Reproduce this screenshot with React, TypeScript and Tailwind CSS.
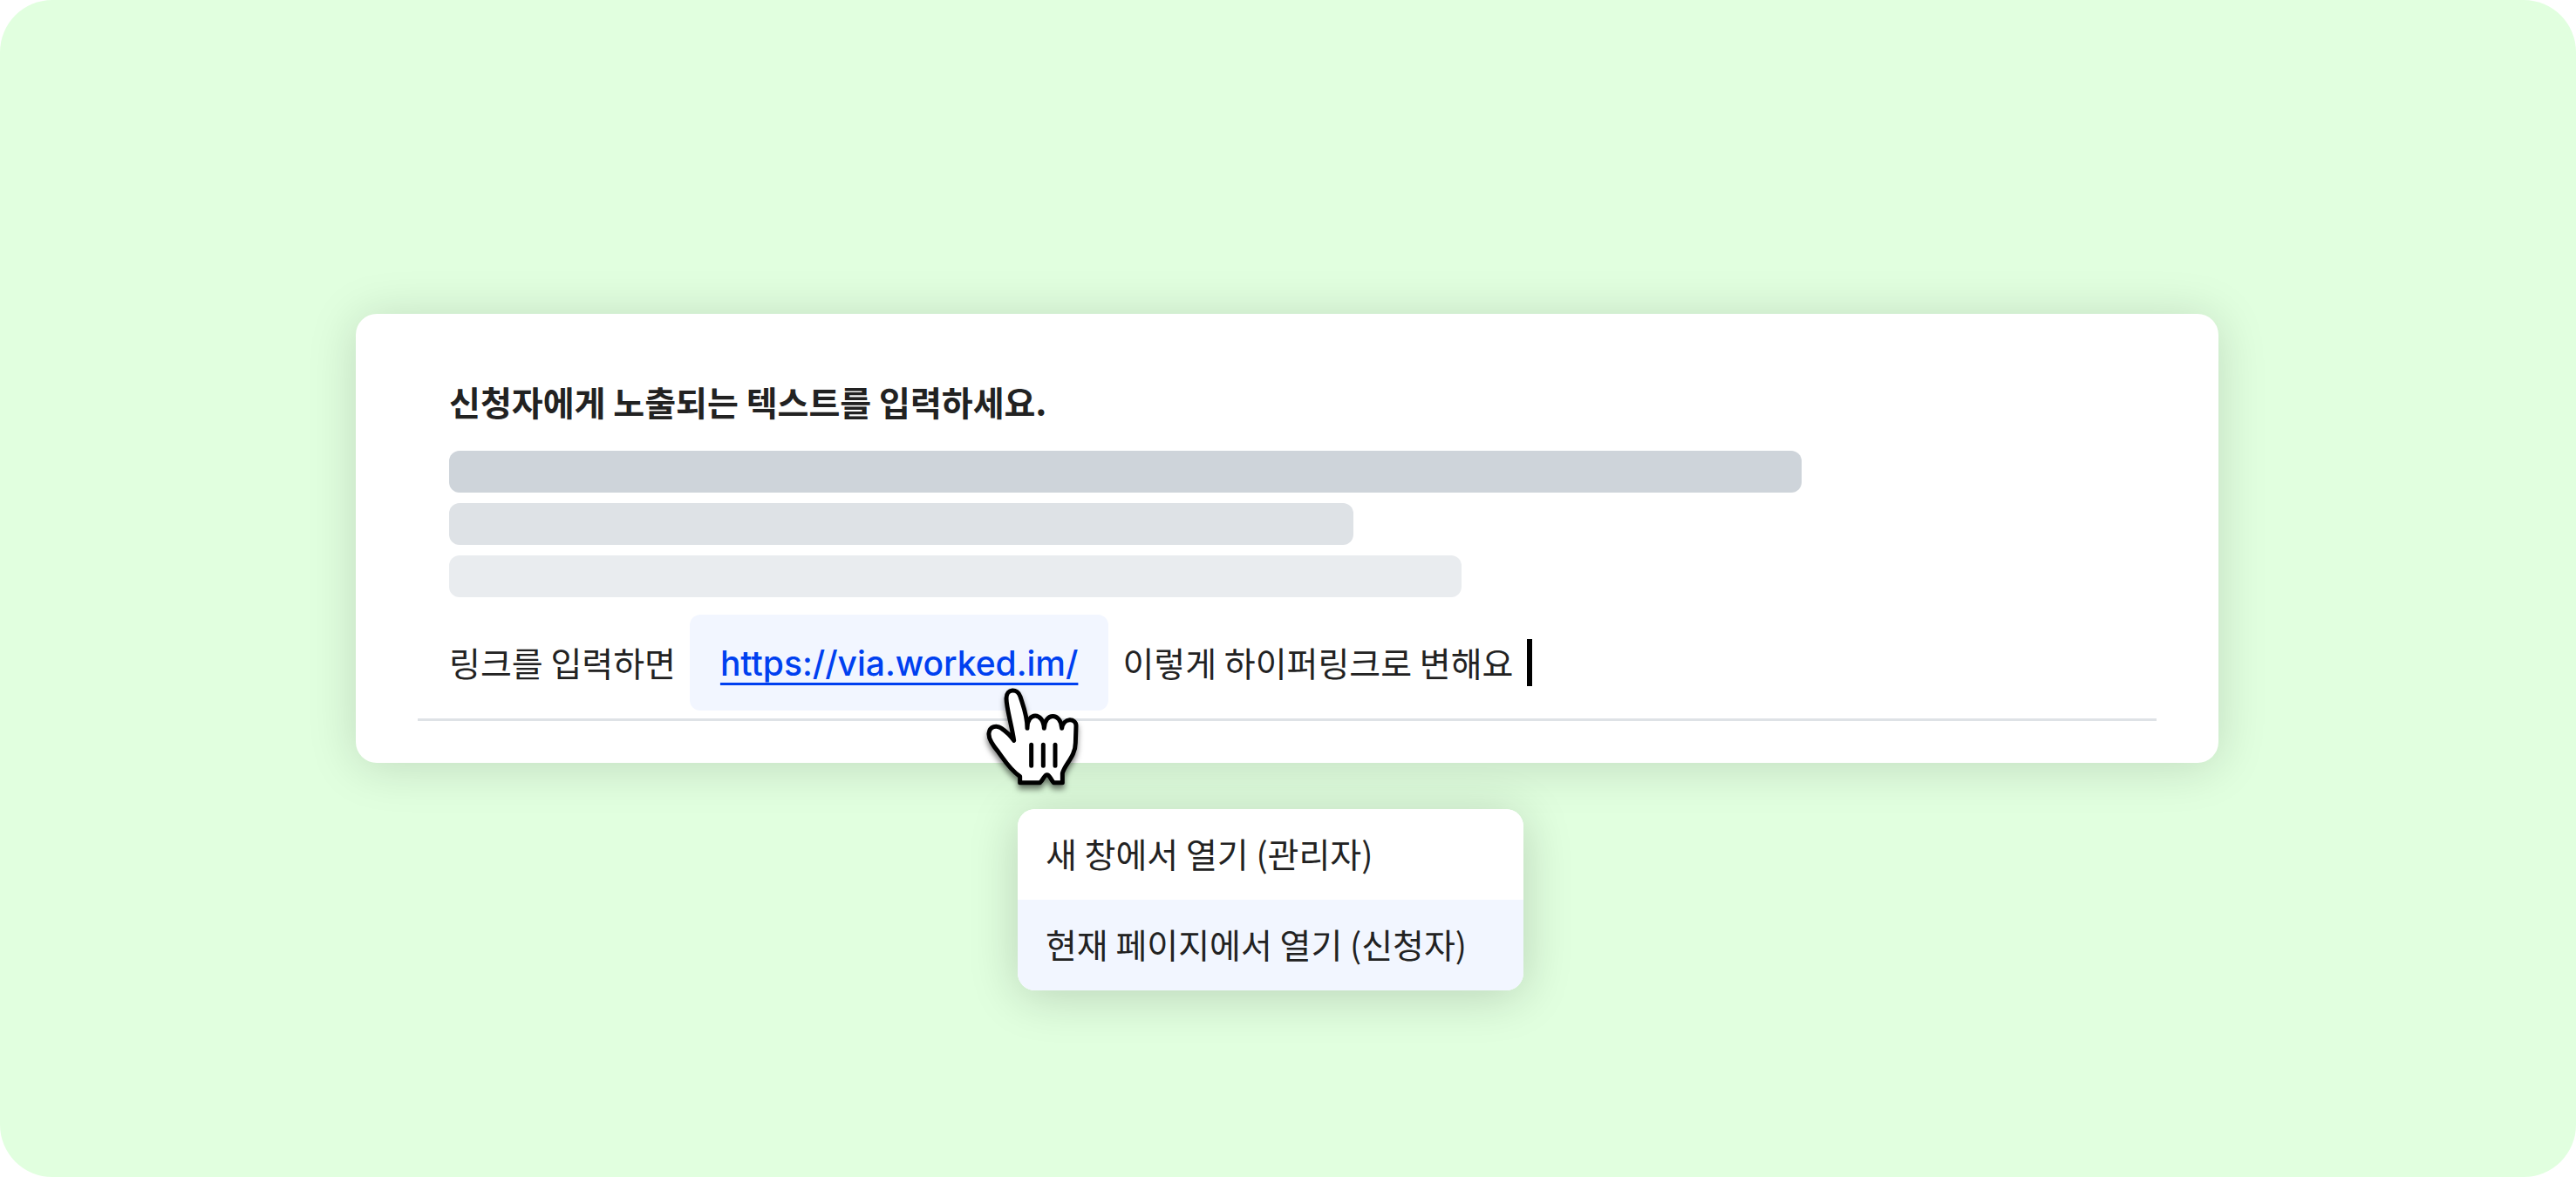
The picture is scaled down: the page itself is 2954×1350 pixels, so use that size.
import { useState } from "react";

const bars = [
  { id: "long", className: "w-[1551px] bg-[#ced4da]" },
  { id: "short", className: "w-[1037px] bg-[#dee2e6]" },
  { id: "medium", className: "w-[1161px] bg-[#e9ecef]" },
];

const options = [
  { id: "blank", label: "새 창에서 열기 (관리자)" },
  { id: "self", label: "현재 페이지에서 열기 (신청자)" },
];

function HandPointer() {
  return (
    <svg
      viewBox="30 50 330 360"
      aria-hidden="true"
      className="absolute top-[82px] left-[339px] z-10 h-[120px] w-[110px] overflow-visible drop-shadow-[0_5px_3px_rgba(0,0,0,0.5)]"
      fill="none"
      stroke="#000"
      strokeLinecap="round"
      strokeLinejoin="round"
    >
      <path
        fill="#fff"
        strokeWidth="15"
        d="M128 237C122 190 102 125 102 92C102 57 141 57 150 86C158 112 174 150 174 195C173 138 229 138 232 195C234 140 290 140 293 195C299 157 342 160 342 186L340 245C340 292 302 320 295 350L295 382H265C253 370 252 355 242 355C232 355 230 372 218 382H149L149 361C112 335 93 301 75 277C53 251 40 230 42 212C45 188 69 183 85 195C103 207 119 224 128 237Z"
      />
      <path strokeWidth="15" d="M188 252V324M229 252V324M270 252V324" />
    </svg>
  );
}

export default function App() {
  const [selected, setSelected] = useState("self");

  return (
    <div className="bg-white">
      <main className="min-h-screen rounded-[60px] bg-[#e1ffdf] pt-[360px] font-['Noto_Sans_CJK_KR',sans-serif] text-[39px] leading-[60px] text-[#222222]">
        {/* Editor card */}
        <section className="mr-[410px] ml-[408px] rounded-[24px] bg-white px-[71px] pt-[70px] pb-12 shadow-[0_4px_56px_rgba(0,0,0,0.15)]">
          <div className="border-b-[3px] border-[#dee2e6] px-9 pb-[9px]">
            <h1 className="font-bold">신청자에게 노출되는 텍스트를 입력하세요.</h1>

            <div className="mt-[27px] flex flex-col gap-3">
              {bars.map((bar) => (
                <div key={bar.id} className={`h-12 max-w-full rounded-[12px] ${bar.className}`} />
              ))}
            </div>

            <div className="mt-5 flex items-center whitespace-nowrap">
              <span className="pb-[3px]">링크를 입력하면</span>
              <div className="relative mx-4 rounded-[12px] bg-[#f2f6ff] px-[35px] pt-[26px] pb-6">
                <a
                  href="https://via.worked.im/"
                  className="block font-['Inter',sans-serif] font-medium text-[#0040f0] underline decoration-[3px] underline-offset-8 [text-decoration-skip-ink:none]"
                >
                  https://via.worked.im/
                </a>
                <HandPointer />

                {/* Link target menu */}
                <div className="absolute top-[223px] left-[376px] flex w-[580px] flex-col overflow-hidden rounded-[20px] bg-white shadow-[0_6px_56px_rgba(0,0,0,0.18)]">
                  {options.map((option) => (
                    <button
                      key={option.id}
                      type="button"
                      onClick={() => setSelected(option.id)}
                      className={`px-8 pt-5 pb-6 text-left ${selected === option.id ? "bg-[#f2f6ff]" : "bg-white"}`}
                    >
                      {option.label}
                    </button>
                  ))}
                </div>
              </div>
              <span className="pb-[3px]">이렇게 하이퍼링크로 변해요</span>
              <span className="ml-4 h-[54px] w-[6px] bg-black" />
            </div>
          </div>
        </section>
      </main>
    </div>
  );
}
